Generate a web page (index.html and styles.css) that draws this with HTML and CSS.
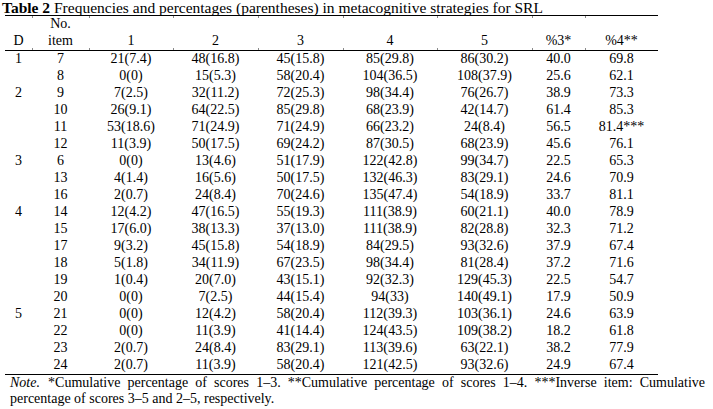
FILE: index.html
```html
<!DOCTYPE html>
<html>
<head>
<meta charset="utf-8">
<link rel="stylesheet" href="styles.css">
</head>
<body>
<div class="page">
  <div class="title"><b>Table 2</b> Frequencies and percentages (parentheses) in metacognitive strategies for SRL</div>
  <table class="data">
    <colgroup>
      <col class="c-d"><col class="c-item"><col class="c-1"><col class="c-2"><col class="c-3"><col class="c-4"><col class="c-5"><col class="c-p3"><col class="c-p4">
    </colgroup>
    <thead>
      <tr>
        <th>D</th><th>No.<br>item</th><th>1</th><th>2</th><th>3</th><th>4</th><th>5</th><th>%3*</th><th>%4**</th>
      </tr>
    </thead>
    <tbody>
      <tr><td>1</td><td>7</td><td>21(7.4)</td><td>48(16.8)</td><td>45(15.8)</td><td>85(29.8)</td><td>86(30.2)</td><td>40.0</td><td>69.8</td></tr>
      <tr><td></td><td>8</td><td>0(0)</td><td>15(5.3)</td><td>58(20.4)</td><td>104(36.5)</td><td>108(37.9)</td><td>25.6</td><td>62.1</td></tr>
      <tr><td>2</td><td>9</td><td>7(2.5)</td><td>32(11.2)</td><td>72(25.3)</td><td>98(34.4)</td><td>76(26.7)</td><td>38.9</td><td>73.3</td></tr>
      <tr><td></td><td>10</td><td>26(9.1)</td><td>64(22.5)</td><td>85(29.8)</td><td>68(23.9)</td><td>42(14.7)</td><td>61.4</td><td>85.3</td></tr>
      <tr><td></td><td>11</td><td>53(18.6)</td><td>71(24.9)</td><td>71(24.9)</td><td>66(23.2)</td><td>24(8.4)</td><td>56.5</td><td>81.4***</td></tr>
      <tr><td></td><td>12</td><td>11(3.9)</td><td>50(17.5)</td><td>69(24.2)</td><td>87(30.5)</td><td>68(23.9)</td><td>45.6</td><td>76.1</td></tr>
      <tr><td>3</td><td>6</td><td>0(0)</td><td>13(4.6)</td><td>51(17.9)</td><td>122(42.8)</td><td>99(34.7)</td><td>22.5</td><td>65.3</td></tr>
      <tr><td></td><td>13</td><td>4(1.4)</td><td>16(5.6)</td><td>50(17.5)</td><td>132(46.3)</td><td>83(29.1)</td><td>24.6</td><td>70.9</td></tr>
      <tr><td></td><td>16</td><td>2(0.7)</td><td>24(8.4)</td><td>70(24.6)</td><td>135(47.4)</td><td>54(18.9)</td><td>33.7</td><td>81.1</td></tr>
      <tr><td>4</td><td>14</td><td>12(4.2)</td><td>47(16.5)</td><td>55(19.3)</td><td>111(38.9)</td><td>60(21.1)</td><td>40.0</td><td>78.9</td></tr>
      <tr><td></td><td>15</td><td>17(6.0)</td><td>38(13.3)</td><td>37(13.0)</td><td>111(38.9)</td><td>82(28.8)</td><td>32.3</td><td>71.2</td></tr>
      <tr><td></td><td>17</td><td>9(3.2)</td><td>45(15.8)</td><td>54(18.9)</td><td>84(29.5)</td><td>93(32.6)</td><td>37.9</td><td>67.4</td></tr>
      <tr><td></td><td>18</td><td>5(1.8)</td><td>34(11.9)</td><td>67(23.5)</td><td>98(34.4)</td><td>81(28.4)</td><td>37.2</td><td>71.6</td></tr>
      <tr><td></td><td>19</td><td>1(0.4)</td><td>20(7.0)</td><td>43(15.1)</td><td>92(32.3)</td><td>129(45.3)</td><td>22.5</td><td>54.7</td></tr>
      <tr><td></td><td>20</td><td>0(0)</td><td>7(2.5)</td><td>44(15.4)</td><td>94(33)</td><td>140(49.1)</td><td>17.9</td><td>50.9</td></tr>
      <tr><td>5</td><td>21</td><td>0(0)</td><td>12(4.2)</td><td>58(20.4)</td><td>112(39.3)</td><td>103(36.1)</td><td>24.6</td><td>63.9</td></tr>
      <tr><td></td><td>22</td><td>0(0)</td><td>11(3.9)</td><td>41(14.4)</td><td>124(43.5)</td><td>109(38.2)</td><td>18.2</td><td>61.8</td></tr>
      <tr><td></td><td>23</td><td>2(0.7)</td><td>24(8.4)</td><td>83(29.1)</td><td>113(39.6)</td><td>63(22.1)</td><td>38.2</td><td>77.9</td></tr>
      <tr class="last"><td></td><td>24</td><td>2(0.7)</td><td>11(3.9)</td><td>58(20.4)</td><td>121(42.5)</td><td>93(32.6)</td><td>24.9</td><td>67.4</td></tr>
    </tbody>
  </table>
  <p class="note"><i class="note-lead">Note.</i> *Cumulative percentage of scores 1–3. **Cumulative percentage of scores 1–4. ***Inverse item: Cumulative percentage of scores 3–5 and 2–5, respectively.</p>
</div>
</body>
</html>
```

FILE: styles.css
```css
html, body {
  margin: 0;
  padding: 0;
  background: #ffffff;
}

body {
  font-family: "Liberation Serif", "Times New Roman", serif;
  color: #000000;
  font-size: 14px;
}

.page {
  width: 713px;
}

.title {
  height: 15px;
  line-height: 16px;
  padding-left: 2px;
  font-size: 15.5px;
  white-space: nowrap;
}

.data {
  margin-left: 5px;
  width: 653px;
  border-collapse: collapse;
  table-layout: fixed;
  border-top: 1px solid #000;
}

.c-d { width: 27px; }
.c-item { width: 57px; }
.c-1 { width: 84px; }
.c-2 { width: 85px; }
.c-3 { width: 85px; }
.c-4 { width: 94px; }
.c-5 { width: 95px; }
.c-p3 { width: 53px; }
.c-p4 { width: 73px; }

.data th {
  font-weight: normal;
  font-size: 14px;
  text-align: center;
  vertical-align: bottom;
  padding: 0 0 1px 0;
  height: 32px;
  line-height: 16.5px;
  border-bottom: 1px solid #000;
  position: relative;
}

.data th + th::before,
.data th + th::after {
  content: "";
  position: absolute;
  left: 0;
  width: 1px;
  height: 2px;
  background: #8a8a8a;
}

.data th + th::before { top: 0; }
.data th + th::after { bottom: 0; }

.data td {
  text-align: center;
  font-size: 14px;
  padding: 0 0 1px 0;
  height: 16px;
  line-height: 16px;
  white-space: nowrap;
}

.data tr.last td {
  border-bottom: 1px solid #000;
}

.note {
  margin: 0;
  padding-left: 10px;
  width: 695px;
  line-height: 16px;
  text-align: justify;
  font-size: 14px;
}

.note-lead {
  display: inline-block;
  padding-right: 1px;
}
```
